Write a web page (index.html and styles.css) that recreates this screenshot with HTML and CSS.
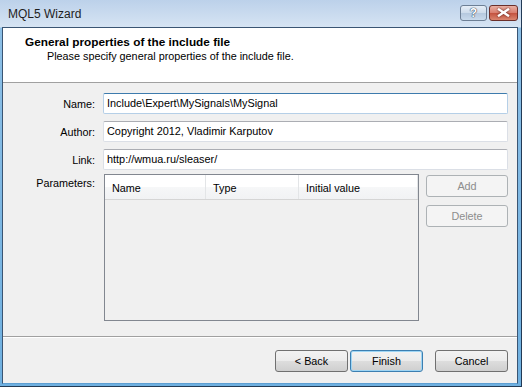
FILE: index.html
```html
<!DOCTYPE html>
<html lang="en">
<head>
    <meta charset="UTF-8">
    <title>MQL5 Wizard</title>
    <link rel="stylesheet" href="styles.css">
</head>
<body>
    <div class="window">
        <div class="titlebar">
            <span class="title">MQL5 Wizard</span>
            <div class="caption-buttons">
                <div class="cap-btn help">?</div>
                <div class="cap-btn close">
                    <svg width="13" height="9" viewBox="0 0 13 9">
                        <path d="M2 1.5 L11 7.5 M11 1.5 L2 7.5" stroke="#fff" stroke-width="2.4" stroke-linecap="square"/>
                    </svg>
                </div>
            </div>
        </div>
        <div class="client">
            <div class="header">
                <div class="header-title">General properties of the include file</div>
                <div class="header-sub">Please specify general properties of the include file.</div>
            </div>

            <div class="form">
                <div class="row">
                    <label>Name:</label>
                    <div class="input focused">Include\Expert\MySignals\MySignal</div>
                </div>
                <div class="row">
                    <label>Author:</label>
                    <div class="input">Copyright 2012, Vladimir Karputov</div>
                </div>
                <div class="row">
                    <label>Link:</label>
                    <div class="input">http://wmua.ru/sleaser/</div>
                </div>
                <div class="row params">
                    <label>Parameters:</label>
                    <div class="list">
                        <div class="list-head">
                            <div class="col c1">Name</div>
                            <div class="col c2">Type</div>
                            <div class="col c3">Initial value</div>
                        </div>
                    </div>
                    <div class="side-buttons">
                        <button class="btn disabled">Add</button>
                        <button class="btn disabled">Delete</button>
                    </div>
                </div>
            </div>

            <div class="footer">
                <button class="btn">&lt; Back</button>
                <button class="btn default">Finish</button>
                <button class="btn cancel">Cancel</button>
            </div>
        </div>
    </div>
</body>
</html>
```

FILE: styles.css
```css
html, body {
    margin: 0;
    padding: 0;
}
body {
    width: 522px;
    height: 387px;
    overflow: hidden;
    font-family: 'Liberation Sans', Arial, sans-serif;
    font-size: 10.8px;
    color: #000;
    background: #1d3550;
}
.window {
    box-sizing: border-box;
    width: 522px;
    height: 387px;
    display: flex;
    flex-direction: column;
    background: linear-gradient(#bcd1ea 0px, #d6e4f3 27px, #8cbfe6 28px, #6fb0e0 100%);
    border-right: 1px solid #223a55;
    border-bottom: 1px solid #223a55;
    padding: 0 3px 2px 2px;
}
.titlebar {
    height: 27px;
    margin: 0 -3px 0 -2px;
    display: flex;
    align-items: center;
    justify-content: space-between;
    flex-shrink: 0;
}
.title {
    padding-left: 8px;
    font-size: 12px;
    color: #1e1e1e;
    margin-top: 1px;
}
.caption-buttons {
    display: flex;
    gap: 2px;
    margin-right: 3px;
    margin-top: -2px;
}
.cap-btn {
    height: 16px;
    box-sizing: border-box;
    border: 1px solid #6d7f95;
    border-radius: 3px;
    display: flex;
    align-items: center;
    justify-content: center;
}
.help {
    width: 27px;
    background: linear-gradient(#e6eef7 0%, #cddbeb 50%, #b5c8de 51%, #c9daec 100%);
    color: #fff;
    font-weight: bold;
    font-size: 12px;
    text-shadow: 0 0 1px #3b4d63, 0 0 1px #3b4d63, 0 0 1px #3b4d63;
}
.close {
    width: 29px;
    border-color: #6b2f2a;
    background: linear-gradient(#eab0a3 0%, #d97d6d 50%, #c4523f 51%, #da866f 100%);
}
.close svg {
    filter: drop-shadow(0 0 1px #5a201a);
}
.client {
    flex: 1;
    display: flex;
    flex-direction: column;
    background: #f0f0f0;
    border: 1px solid #3a5573;
    border-bottom-color: #5d9fd3;
}
.header {
    height: 55px;
    flex-shrink: 0;
    background: #fff;
    border-bottom: 1px solid #a0a0a0;
    padding-left: 22px;
    padding-top: 7px;
    box-sizing: border-box;
}
.header-title {
    font-weight: bold;
    font-size: 11.8px;
    line-height: 14px;
}
.header-sub {
    padding-left: 22px;
    line-height: 14px;
    margin-top: 0px;
}
.form {
    flex: 1;
    padding: 10px 9px 0 0;
}
.row {
    display: flex;
    align-items: center;
    margin-bottom: 7px;
}
.row label {
    width: 100px;
    box-sizing: border-box;
    text-align: right;
    padding-right: 8px;
    flex-shrink: 0;
}
.input {
    flex: 1;
    height: 21px;
    box-sizing: border-box;
    background: #fff;
    border: 1px solid #dbdfe6;
    border-top-color: #abadb3;
    border-radius: 2px;
    padding-left: 3px;
    line-height: 19px;
    font-size: 10.9px;
}
.input.focused {
    border-color: #b5cfe7;
    border-top-color: #3d7bad;
}
.params {
    align-items: flex-start;
    margin-top: -3px;
}
.params label {
    padding-top: 3px;
}
.list {
    width: 315px;
    height: 147px;
    box-sizing: border-box;
    border: 1px solid #828790;
    background: #f0f0f0;
    margin-left: 1px;
}
.list-head {
    display: flex;
    height: 24px;
    background: linear-gradient(#ffffff 0%, #ffffff 50%, #f6f7f8 51%, #f1f2f4 100%);
    border-bottom: 1px solid #d5d5d5;
}
.col {
    box-sizing: border-box;
    padding-left: 7px;
    line-height: 26px;
    border-right: 1px solid #e3e5e7;
}
.c1 { width: 101px; }
.c2 { width: 93px; }
.c3 { width: 119px; }
.side-buttons {
    display: flex;
    flex-direction: column;
    gap: 8px;
    margin-left: 7px;
    margin-top: 1px;
    flex: 1;
}
.btn {
    height: 22px;
    box-sizing: border-box;
    font-family: 'Liberation Sans', Arial, sans-serif;
    font-size: 10.8px;
    color: #000;
    border: 1px solid #707070;
    border-radius: 3px;
    background: linear-gradient(#f2f2f2 0%, #ebebeb 50%, #dddddd 51%, #cfcfcf 100%);
    padding: 0;
}
.btn.disabled {
    color: #8d8d8d;
    border-color: #adb2b5;
    background: #f4f4f4;
}
.btn.default {
    border-color: #3c7fb1;
    box-shadow: inset 0 0 0 1px #9ed5f4;
}
.footer {
    height: 47px;
    flex-shrink: 0;
    border-top: 1px solid #a0a0a0;
    box-shadow: inset 0 1px 0 #fff;
    display: flex;
    justify-content: flex-end;
    align-items: flex-start;
    padding: 13px 9px 0 0;
    gap: 2px;
    box-sizing: border-box;
}
.footer .btn {
    width: 73px;
}
.footer .cancel {
    margin-left: 10px;
}
```
